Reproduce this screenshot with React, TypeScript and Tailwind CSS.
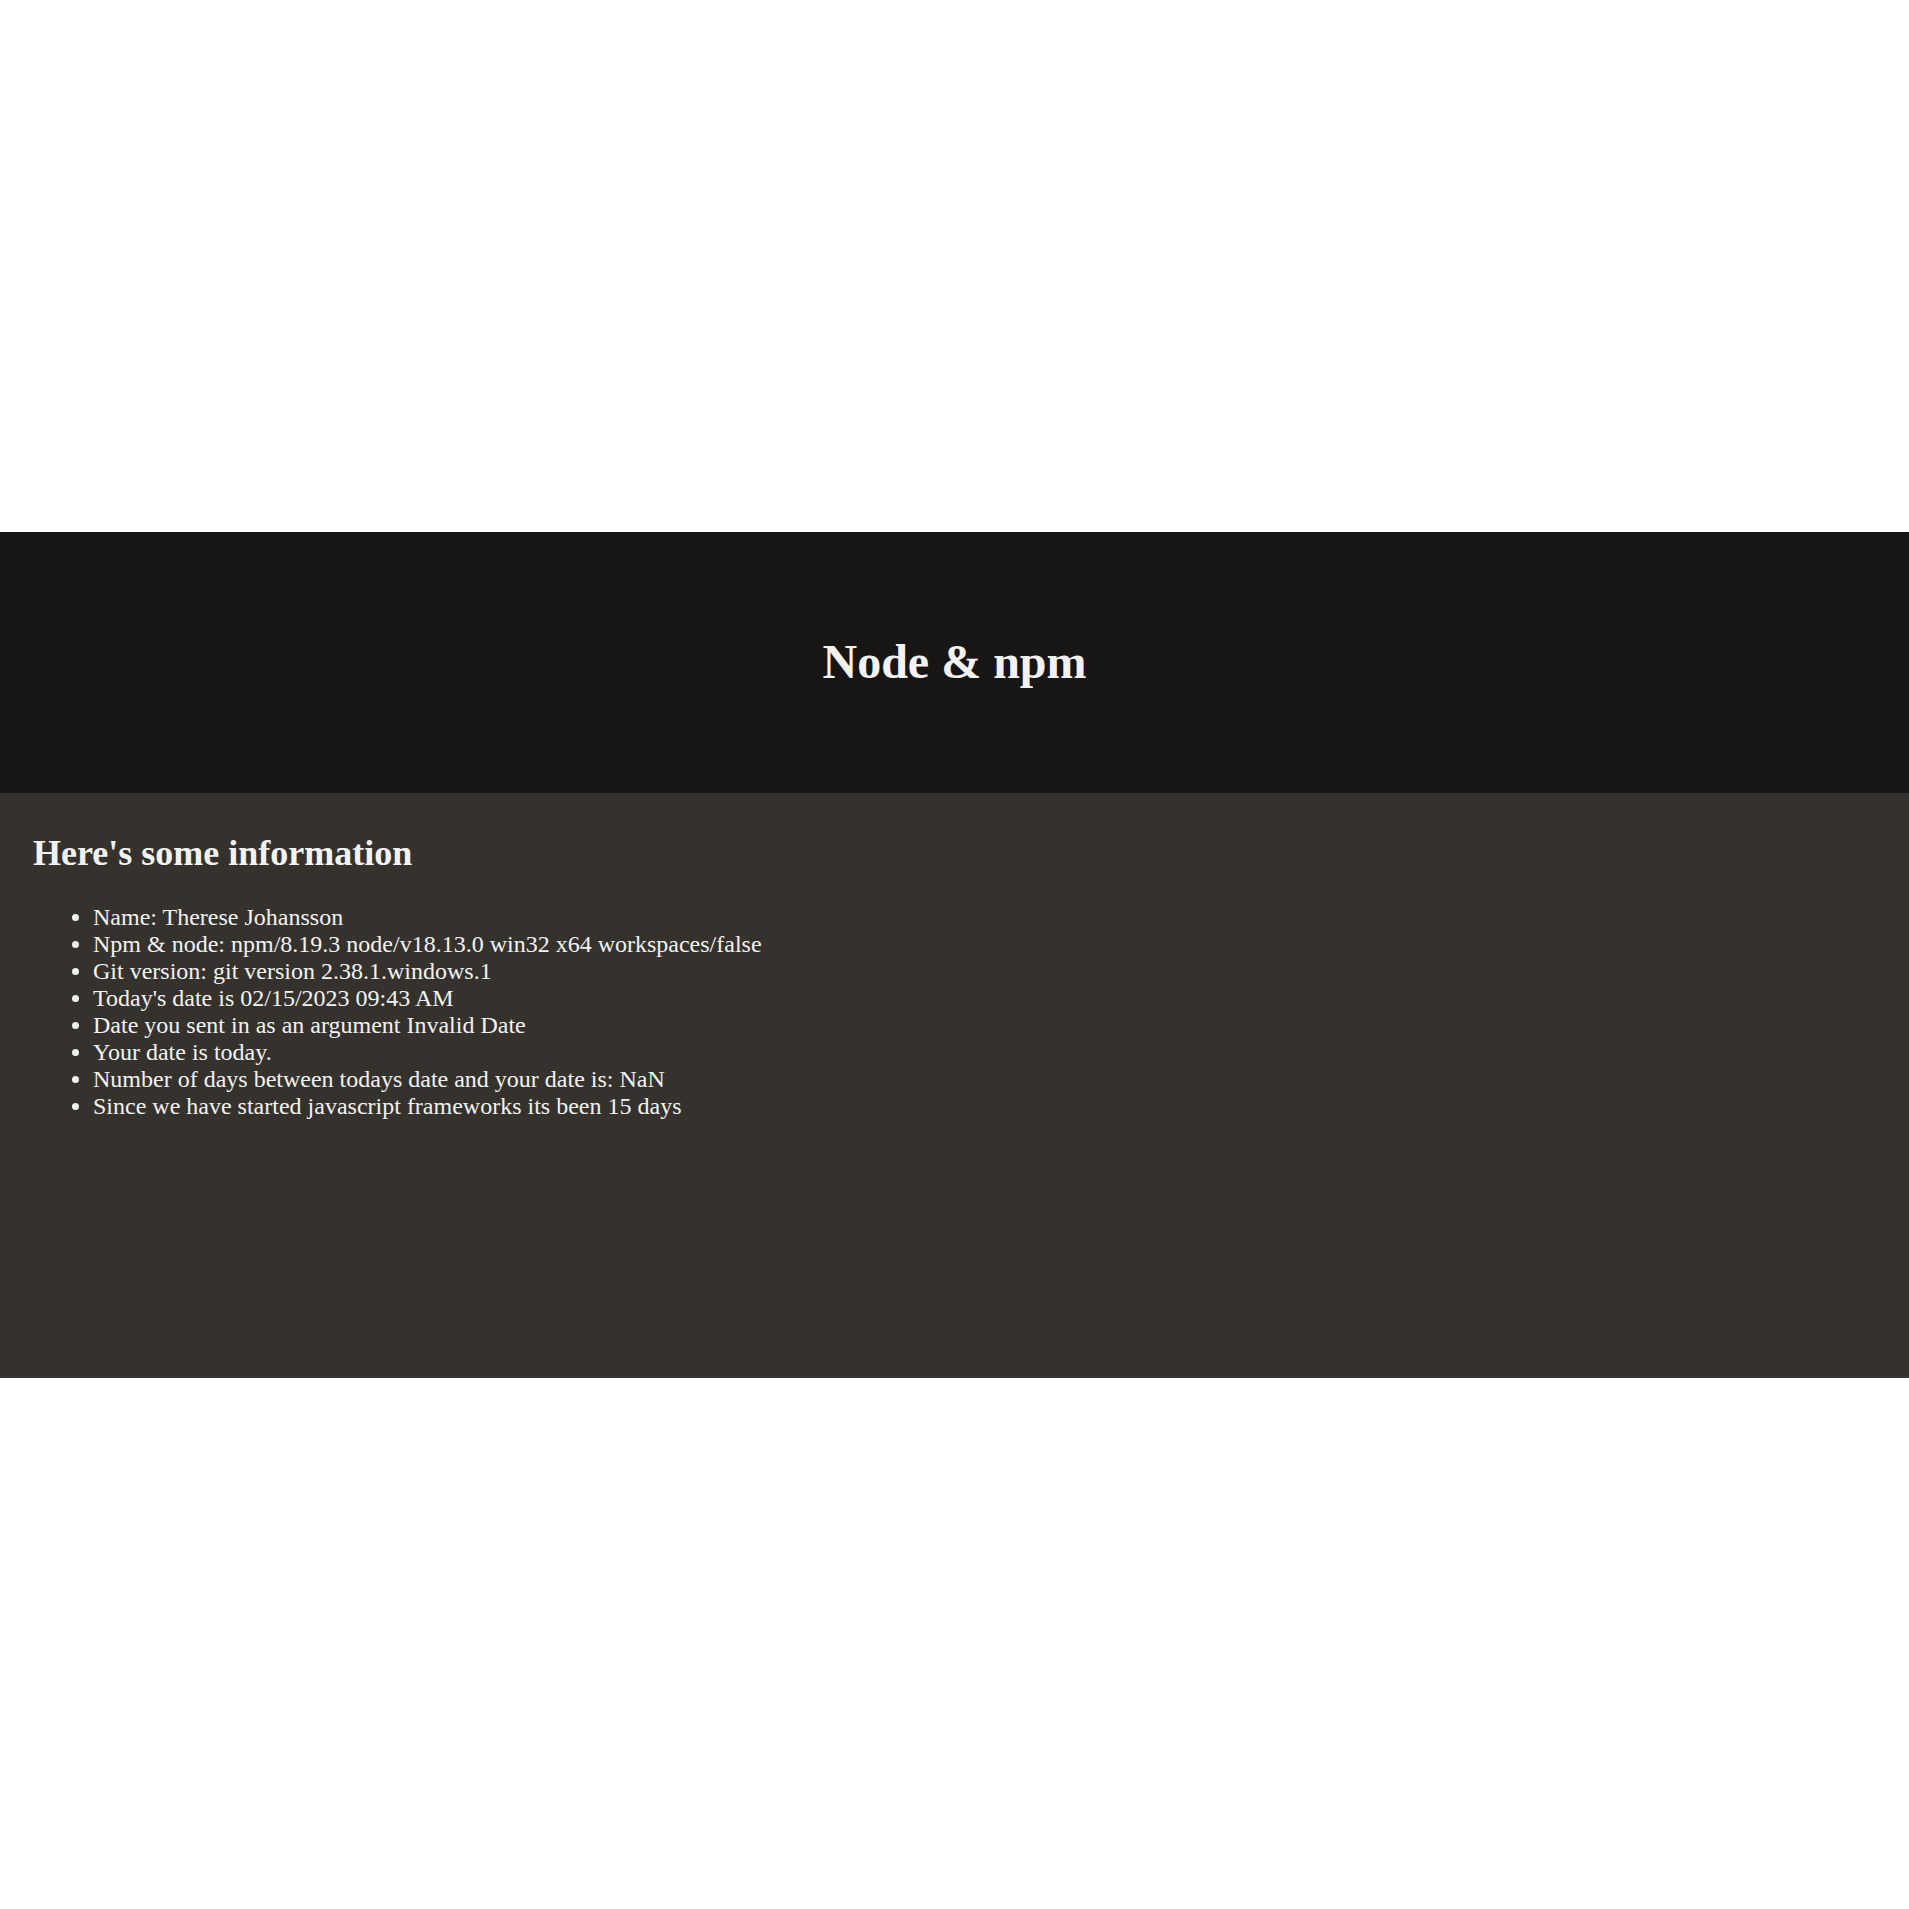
import React from 'react';

const info = [
  'Name: Therese Johansson',
  'Npm & node: npm/8.19.3 node/v18.13.0 win32 x64 workspaces/false',
  'Git version: git version 2.38.1.windows.1',
  "Today's date is 02/15/2023 09:43 AM",
  'Date you sent in as an argument Invalid Date',
  'Your date is today.',
  'Number of days between todays date and your date is: NaN',
  'Since we have started javascript frameworks its been 15 days',
];

const App: React.FC = () => {
  return (
    <div className="min-h-screen flex flex-col justify-center bg-white text-[#f2f2f2] font-['Liberation_Serif','Times_New_Roman',serif]">
      {/* Header */}
      <header className="h-[261px] bg-[#171614] flex items-center justify-center">
        <h1 className="text-[48px] font-bold leading-normal">Node &amp; npm</h1>
      </header>

      {/* Info */}
      <main className="h-[585px] bg-[#35322d] pl-[33px] pt-[33px]">
        <h2 className="text-[36px] font-bold leading-normal">Here's some information</h2>
        <ul className="list-disc pl-[60px] mt-[24px] text-[24px] leading-[27px]">
          {info.map((line) => (
            <li key={line}>{line}</li>
          ))}
        </ul>
      </main>
    </div>
  );
};

export default App;
